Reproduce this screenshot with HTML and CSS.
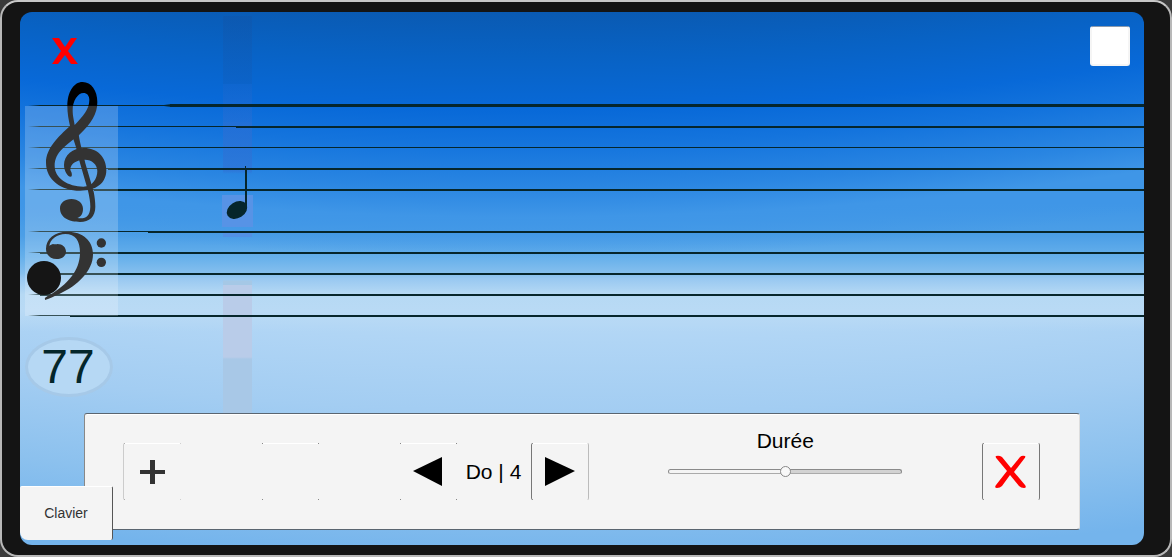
FILE: index.html
```
<!DOCTYPE html>
<html lang="fr">
<head>
  <meta charset="UTF-8" />
  <meta name="viewport" content="width=device-width, initial-scale=1.0"/>
  <title>Partition</title>
  <link rel="stylesheet" href="styles.css">
</head>
<body>

<div class="device">
  <main class="screen">
    <div class="cursor-column"></div>

    <header class="top-bar">
      <button type="button" class="btn-close" aria-label="Fermer">
        <svg width="26" height="28" viewBox="0 0 26 28">
          <path d="M0 0H7L13 9L19 0H25L16 13L26 26H19L13 17L6 26H0L9 13Z" fill="#f00"/>
        </svg>
      </button>
      <input type="checkbox" class="toggle" aria-label="Option">
    </header>

    <!-- portée -->
    <svg class="score" width="100%" height="240">
      <defs>
        <linearGradient id="fade" gradientUnits="userSpaceOnUse" x1="8" y1="0" x2="20" y2="0">
          <stop offset="0" stop-color="#06262c" stop-opacity="0"/>
          <stop offset="1" stop-color="#06262c"/>
        </linearGradient>
      </defs>

      <g fill="url(#fade)">
        <rect x="8" y="27" width="100%" height="1"/>
        <rect x="8" y="48" width="100%" height="1"/>
        <rect x="8" y="69" width="100%" height="1"/>
        <rect x="8" y="90" width="100%" height="1"/>
        <rect x="8" y="111" width="100%" height="1"/>
        <rect x="8" y="153" width="100%" height="1"/>
        <rect x="8" y="174" width="100%" height="1"/>
        <rect x="8" y="195" width="100%" height="1"/>
        <rect x="8" y="216" width="100%" height="1"/>
        <rect x="8" y="237" width="100%" height="1"/>
      </g>
      <g fill="#06262c">
        <path d="M144 27L152 26V29L144 28Z"/>
        <rect x="150" y="26" width="100%" height="3"/>
        <rect x="216" y="48" width="100%" height="2"/>
        <rect x="88" y="90" width="100%" height="2"/>
        <rect x="74" y="111" width="100%" height="2"/>
        <rect x="128" y="153" width="100%" height="2"/>
        <rect x="20" y="174" width="100%" height="2"/>
        <rect x="20" y="195" width="100%" height="2"/>
        <rect x="20" y="216" width="100%" height="2"/>
        <rect x="50" y="237" width="100%" height="2"/>
      </g>

      <!-- clé de sol et clé de fa -->
      <svg class="clefs" x="0" y="-8" width="110" height="240" viewBox="0 0 330 720">
        <path fill-rule="evenodd" d="M188 36C214 36 232 62 232 96C232 132 214 160 178 194C140 225 104 245 104 288C104 325 145 350 190 350C218 350 232 325 232 303C232 283 215 269 195 269C172 269 152 279 151 298C151 304 158 308 155 319C146 325 132 305 132 285C132 255 158 234 192 234C232 234 259 262 259 300C259 340 228 362 180 362C125 362 78 330 78 278C78 235 115 200 150 168C146 150 142 130 142 108C142 68 160 36 188 36ZM190 69C174 69 158 92 158 120C158 140 162 150 164 165C190 138 208 117 208 90C208 77 201 69 190 69Z"/>
        <path d="M158 202L176 192C180 225 190 250 196 280L221 365C224 380 226 395 226 410C226 440 208 456 180 456C150 456 120 445 120 415C120 398 135 387 154 387C175 387 189 400 189 416C189 432 182 440 172 444C195 448 210 440 211 410C211 395 208 380 204 362L178 272C172 245 168 230 158 202Z"/>
        <path d="M75 688C72 684 80 680 88 676C145 642 180 600 180 548C180 512 166 492 136 492C112 492 90 507 88 528C94 520 106 524 112 522C128 522 138 532 138 545C138 558 126 567 110 567C90 567 78 554 78 536C78 506 104 485 142 485C188 485 219 512 219 553C219 603 172 648 118 672C104 678 90 686 75 690Z"/>
        <circle cx="244" cy="519" r="14"/>
        <circle cx="244" cy="577" r="14"/>
      </svg>
      <rect x="5" y="28" width="93" height="210" fill="#fff" fill-opacity=".2"/>
      <circle cx="24" cy="200" r="17" fill="#151515"/>

      <!-- noire -->
      <g class="note">
        <rect x="202" y="117" width="31" height="32"/>
        <ellipse cx="217" cy="132" rx="11" ry="8" transform="rotate(-32 217 132)"/>
        <path d="M225 89V88H226V90H227V131H225Z"/>
      </g>
    </svg>

    <div class="tempo">77</div>

    <section class="toolbar">
      <button type="button" class="tool tool-left" aria-label="Ajouter">
        <svg width="26" height="24" viewBox="0 0 26 24">
          <path d="M10 0H15V10H25V14H15V24H10V14H0V10H10Z" fill="#323232"/>
        </svg>
      </button>
      <button type="button" class="tool" aria-label="Vide"></button>

      <div class="note-picker">
        <button type="button" class="tool" aria-label="Note précédente">
          <svg width="30" height="30" viewBox="0 0 30 30"><path d="M29 0V29L0 14Z"/></svg>
        </button>
        <span class="note-name">Do | 4</span>
        <button type="button" class="tool tool-left-dark tool-right" aria-label="Note suivante">
          <svg width="30" height="30" viewBox="0 0 30 30"><path d="M0 0V29L30 14Z"/></svg>
        </button>
      </div>

      <div class="duration">
        <label for="duree">Durée</label>
        <input type="range" id="duree" min="0" max="100" value="50">
      </div>

      <button type="button" class="tool tool-left-dark tool-right-dark" aria-label="Supprimer">
        <svg width="32" height="34" viewBox="0 0 32 34">
          <path d="M1 1Q4 0 7 2L16 13L25 2Q27 0 30 1Q31 2 29 4L19 17L30 30Q32 33 29 33Q26 33 24 31L15 20L7 31Q5 33 2 33Q-1 33 1 30L12 16L2 4Q0 2 1 1Z" fill="#f00"/>
        </svg>
      </button>
    </section>

    <button type="button" class="btn-keyboard">Clavier</button>
  </main>
</div>

</body>
</html>
```
FILE: styles.css
```
* {
  box-sizing: border-box;
}

body {
  margin: 0;
  background: #3a3a3a;
  font-family: "Liberation Sans", Arial, sans-serif;
}

button {
  border: 0;
  padding: 0;
  background: none;
  font-family: inherit;
  cursor: pointer;
}

.device {
  display: flex;
  min-height: 100vh;
  padding: 10px 26px 10px 18px;
  border: 2px solid #b8b8b8;
  border-top-color: #c8c8c8;
  border-radius: 18px;
  background: #141414;
}

.screen {
  position: relative;
  display: flex;
  flex-direction: column;
  flex: 1;
  border-radius: 12px;
  overflow: hidden;
  background:
    radial-gradient(circle 4300px at 45% -4000px, #0a5ab2 4000px, #0862c4 4045px, #0869d8 4098px, #1474dd 4132px, #2a86e2 4175px, #3f96e7 4205px, rgba(82, 163, 232, 0) 4245px),
    linear-gradient(#3f96e7 36%, #4c9fe7 42%, #66b0eb 46%, #85bfee 49%, #98c8f1 50%, #b6d9f4 53%, #b9daf5 56%, rgba(185, 218, 245, 0) 60%),
    radial-gradient(circle 4600px at 50% -4000px, #b9daf5 4290px, #b0d5f5 4330px, #a3cdf2 4400px, #8cc1ee 4480px, #74b4ec 4550px);
}

/* position de lecture */
.cursor-column {
  position: absolute;
  top: 4px;
  bottom: 132px;
  left: 203px;
  width: 29px;
  background: linear-gradient(
    rgba(20, 80, 160, 0.3) 0, rgba(20, 90, 180, 0.3) 68px,
    rgba(30, 100, 200, 0.3) 68px, rgba(50, 110, 210, 0.4) 106px,
    rgba(50, 110, 210, 0.5) 106px, rgba(50, 110, 210, 0.5) 155px,
    transparent 158px, transparent 215px,
    #5290e4 215px, #5290e4 221px,
    transparent 221px, transparent 264px,
    #a5c8e6 265px, #a5c8e6 269px,
    #b9cce9 269px, #b9cce9 341px,
    #a8c8e7 343px, #a8c8e7 100%);
}

.top-bar {
  position: relative;
  display: flex;
  justify-content: space-between;
  align-items: flex-end;
  padding: 14px 14px 12px 32px;
}

.btn-close {
  display: flex;
}

.toggle {
  appearance: none;
  width: 40px;
  height: 40px;
  margin: 0;
  border: 2px solid #f5f5f5;
  border-top: 1px solid #8a9aad;
  border-radius: 3px;
  background: #fff;
}

.score {
  position: relative;
  display: block;
  flex: none;
  overflow: visible;
}

.note {
  fill: #06262c;
}

.note rect {
  fill: #5793e6;
}

.tempo {
  position: relative;
  width: 88px;
  margin: 19px 0 16px 5px;
  padding-right: 2px;
  border: 3px solid #a6c9e8;
  border-radius: 50%;
  background: #b6d8f4;
  color: #04262a;
  font-size: 48px;
  line-height: 54px;
  text-align: center;
}

.toolbar {
  position: relative;
  display: flex;
  justify-content: space-between;
  align-items: center;
  margin: 0 64px 15px;
  padding: 15px 39px 15px 38px;
  border: 1px solid #5a6570;
  border-left-color: #888;
  border-right-color: #ddd;
  border-radius: 3px;
  background: #f4f4f4;
  box-shadow: inset 0 1px #fff;
}

.tool {
  display: flex;
  justify-content: center;
  align-items: center;
  width: 58px;
  height: 57px;
  background:
    linear-gradient(#888, #888) 1px 0 / 1px 1px no-repeat,
    linear-gradient(#888, #888) 57px 0 / 1px 1px no-repeat,
    linear-gradient(#888, #888) 1px 56px / 1px 1px no-repeat,
    linear-gradient(#888, #888) 57px 56px / 1px 1px no-repeat,
    linear-gradient(#fff, #fff) 2px 0 / 55px 1px no-repeat;
}

.tool-left {
  border-left: 1px solid #ccc;
}

.tool-left-dark {
  border-left: 1px solid #777;
}

.tool-right {
  border-right: 1px solid #bbb;
}

.tool-right-dark {
  border-right: 1px solid #777;
}

.tool-left,
.tool-left-dark {
  background-position: 0 0, 56px 0, 0 56px, 56px 56px, 1px 0;
  border-radius: 2px;
}

.note-picker {
  display: flex;
  align-items: center;
}

.note-name {
  width: 74px;
  font-size: 21px;
  text-align: center;
  white-space: nowrap;
}

.duration {
  display: flex;
  flex-direction: column;
  gap: 10px;
  width: 234px;
  padding-bottom: 35px;
  text-align: center;
}

.duration label {
  font-size: 21px;
  line-height: 24px;
}

.duration input {
  appearance: none;
  width: 100%;
  height: 16px;
  margin: 0;
  background: none;
}

.duration input::-webkit-slider-runnable-track {
  height: 5px;
  border: 1px solid #8a8a8a;
  border-bottom-color: #aaa;
  border-radius: 3px;
  background: linear-gradient(90deg, #f4f4f4 50%, #d2d2d2 50%);
}

.duration input::-webkit-slider-thumb {
  appearance: none;
  width: 11px;
  height: 11px;
  margin-top: -4px;
  border: 1px solid #888;
  border-radius: 50%;
  background: #f8f8f8;
}

.btn-keyboard {
  position: absolute;
  bottom: 5px;
  left: 0;
  width: 93px;
  height: 54px;
  padding-bottom: 2px;
  border-top: 1px solid #fff;
  border-right: 1px solid #555;
  border-radius: 2px 2px 2px 8px;
  background: #f4f4f4;
  color: #323232;
  font-size: 14px;
}
```
